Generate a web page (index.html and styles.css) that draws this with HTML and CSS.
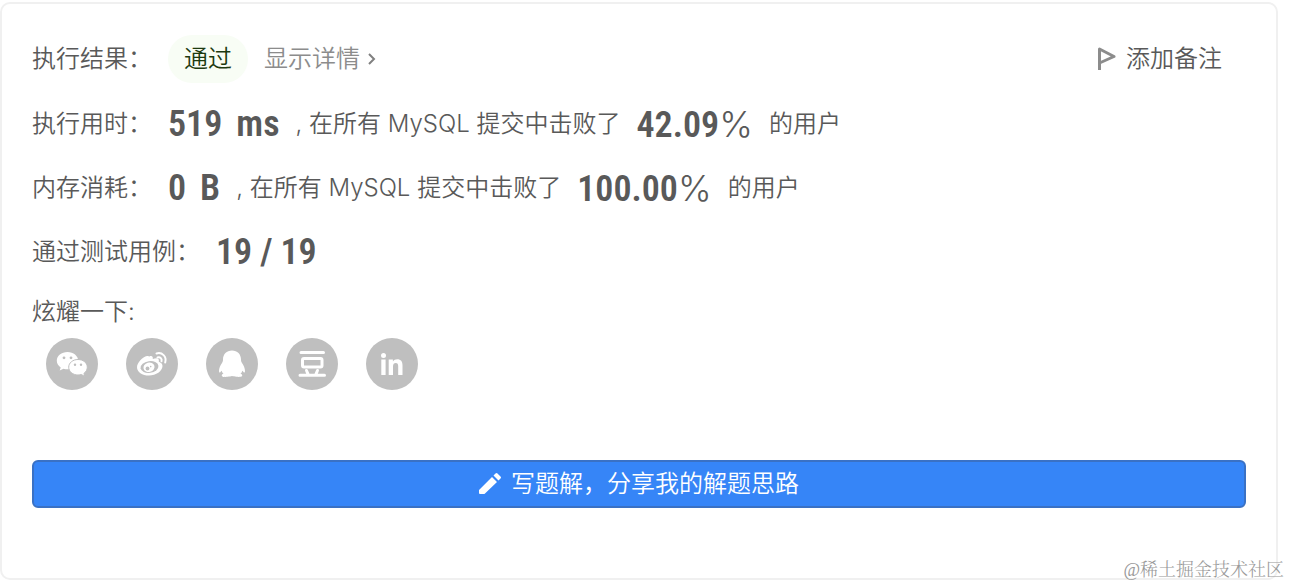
FILE: index.html
```html
<!DOCTYPE html>
<html lang="zh-CN">
<head>
    <meta charset="UTF-8">
    <meta name="viewport" content="width=device-width, initial-scale=1.0">
    <title>执行结果</title>
    <link rel="stylesheet" href="styles.css">
</head>
<body>

<main class="result-card">
    <div class="row status-row">
        <span class="label">执行结果：</span>
        <span class="status">通过</span>
        <a class="detail-link" href="#">显示详情
            <svg class="chevron" viewBox="0 0 8 14" aria-hidden="true"><path d="M1 2l5 5-5 5"/></svg>
        </a>
        <button class="note-btn" type="button">
            <svg class="flag" viewBox="0 0 20 26" aria-hidden="true"><path d="M3.500 24V3L18 10.500 3.500 17"/></svg>
            添加备注
        </button>
    </div>

    <div class="row">
        <span class="label">执行用时：</span>
        <span class="value"><span>519</span><span>ms</span></span>
        <span class="text">, 在所有 MySQL 提交中击败了</span>
        <span class="value rate"><span>42.09</span><span class="percent">%</span></span>
        <span class="text">的用户</span>
    </div>

    <div class="row">
        <span class="label">内存消耗：</span>
        <span class="value"><span>0</span><span>B</span></span>
        <span class="text">, 在所有 MySQL 提交中击败了</span>
        <span class="value rate"><span>100.00</span><span class="percent">%</span></span>
        <span class="text">的用户</span>
    </div>

    <div class="row">
        <span class="label">通过测试用例：</span>
        <span class="value count"><span>19</span><span>/</span><span>19</span></span>
    </div>

    <div class="share-title">炫耀一下:</div>
    <div class="share">
        <button class="share-btn" type="button" aria-label="微信">
            <svg viewBox="0 0 52 52" aria-hidden="true">
                <path class="fill" d="M21.500 14C15.500 14 10.800 17.800 10.800 22.700c0 2.700 1.500 5 3.900 6.700l-1 3.200 3.800-1.900c1.300.4 2.600.6 4 .6 6 0 10.700-3.900 10.700-8.600S27.500 14 21.500 14z"/>
                <circle class="dot" cx="18" cy="19.800" r="1.400"/>
                <circle class="dot" cx="25" cy="19.800" r="1.400"/>
                <path class="fill edge" d="M32 21.500c-5.200 0-9.300 3.400-9.300 7.700s4.100 7.800 9.300 7.800c1.200 0 2.300-.2 3.300-.5l3.500 1.900-.9-3c2.100-1.500 3.400-3.700 3.400-6.200 0-4.300-4.100-7.700-9.300-7.700z"/>
                <circle class="dot" cx="29" cy="26.800" r="1.200"/>
                <circle class="dot" cx="35" cy="26.800" r="1.200"/>
            </svg>
        </button>
        <button class="share-btn" type="button" aria-label="微博">
            <svg viewBox="0 0 52 52" aria-hidden="true">
                <path class="fill" d="M23.500 18.500c2-.9 3.600-.4 3.300 2.500 3-1.300 7-1.600 6 2.700 2 .7 3.700 2 3.700 4.300 0 5-6.500 9.500-13.500 9.500-6.800 0-12-3.500-12-8.300 0-4.200 5.600-10.400 10-11.200 1-.2 1.900 0 2.500.5z"/>
                <ellipse class="dot" cx="23.500" cy="29" rx="9" ry="5.800" transform="rotate(-8 23.500 29)"/>
                <ellipse class="fill" cx="23" cy="29.300" rx="5.600" ry="4.700" transform="rotate(-15 23 29.300)"/>
                <circle class="dot" cx="21.500" cy="30.500" r="1.900"/>
                <circle class="dot" cx="24.700" cy="28.600" r=".8"/>
                <path class="wave" d="M30.500 15.500c5.500-1.700 10.500 3 8.700 9M31.500 19.500c2.800-.8 4.700 1.300 4 3.800"/>
            </svg>
        </button>
        <button class="share-btn" type="button" aria-label="QQ">
            <svg viewBox="0 0 52 52" aria-hidden="true">
                <path class="fill" d="M26 12.500c-5.400 0-9 3.800-9 9 0 1.500-.2 2.200-1 3.400-1.500 2.300-3.100 5.300-3 8 .1 1.700.8 2 1.500 1 .4-.6.700-.9 1.100-1.200.4 1.200 1 2.200 1.900 3.100-1.300.4-1.800 1.100-1.700 1.900.2 1.200 2.700 1.300 5.700 1.100 1.900-.2 3.300-.3 4.500-.7 1.200.4 2.600.5 4.500.7 3 .2 5.500.1 5.700-1.100.1-.8-.4-1.500-1.700-1.900.9-.9 1.500-1.900 1.900-3.100.4.300.7.600 1.100 1.200.7 1 1.400.7 1.500-1 .1-2.700-1.500-5.700-3-8-.8-1.200-1-1.900-1-3.400 0-5.200-3.600-9-9-9z"/>
            </svg>
        </button>
        <button class="share-btn" type="button" aria-label="豆瓣">
            <svg viewBox="0 0 52 52" aria-hidden="true">
                <path class="douban" d="M15 14.500h22.500M14 37.300h24.500M20.500 32.500l1.800 4.300M31.500 32.500l-1.800 4.300"/>
                <rect class="douban" x="16.500" y="20.500" width="19.500" height="8.500" rx="1.500"/>
            </svg>
        </button>
        <button class="share-btn" type="button" aria-label="LinkedIn">
            <svg viewBox="0 0 52 52" aria-hidden="true">
                <circle class="fill" cx="17.500" cy="17.500" r="2.500"/>
                <path class="fill" d="M15.300 21.500h4.300V37h-4.300zM22.700 21.500h4.200v2c1-1.500 2.400-2.300 4.300-2.300 3.700 0 5.300 2.200 5.300 6.100V37h-4.300v-8.800c0-2.200-.8-3.300-2.400-3.300-1.800 0-2.800 1.200-2.800 3.400V37h-4.300z"/>
            </svg>
        </button>
    </div>

    <button class="write-btn" type="button">
        <svg class="pencil" viewBox="0 0 22 22" aria-hidden="true"><path d="M1 21q-1 0-1-1v-3L13 4l5 5L6 20.500q-.5.500-1.500.5zM14.500 2.500L16.500.5q1-1 2 0l3 3q1 1 0 2l-2 2z"/></svg>
        写题解，分享我的解题思路
    </button>
</main>

<div class="watermark">@稀土掘金技术社区</div>

</body>
</html>
```

FILE: styles.css
```css
* { box-sizing: border-box; }
body { margin: 0; padding: 2px 12px 6px 0; background: #fff; color: #595959; font-family: "Inter", "Noto Sans CJK SC", sans-serif; font-size: 24px; font-weight: 350; line-height: 36px; }
button { padding: 0; border: none; background: none; color: inherit; font: inherit; cursor: pointer; }

.result-card { padding: 24px 30px 70px; border: 2px solid #f0f0f0; border-radius: 10px; }

/* Result rows */
.row { display: flex; align-items: center; height: 64px; line-height: 64px; white-space: pre; }
.label { margin-right: 16px; }
.value { display: flex; align-items: baseline; gap: 14px; margin-right: 16px; font-family: "DIN Alternate", "Roboto Condensed", "Liberation Sans Narrow", "Roboto", sans-serif; font-size: 36px; font-weight: 600; }
.rate { gap: 0; }
.count { gap: 8px; }
.text { margin-right: 16px; }
.percent { font-family: "Inter", sans-serif; font-weight: 300; }

.status-row { height: 62px; margin-bottom: 2px; line-height: 48px; }
.status { padding: 0 16px; border-radius: 24px; background: #f8fdf5; color: #1d3a10; }
.detail-link { display: flex; align-items: center; gap: 8px; margin-left: 16px; color: #8c8c8c; text-decoration: none; white-space: normal; }
.chevron { width: 8px; height: 14px; fill: none; stroke: #808080; stroke-width: 2; }
.note-btn { display: flex; align-items: center; gap: 10px; margin-left: auto; margin-right: 24px; white-space: normal; }
.flag { width: 20px; height: 26px; fill: none; stroke: #8c8c8c; stroke-width: 3; stroke-linejoin: round; }

/* Share buttons */
.share-title { margin-top: 10px; }
.share { display: flex; gap: 28px; margin: 8px 14px 70px; }
.share-btn { width: 52px; height: 52px; border-radius: 50%; background: #bfbfbf; }
.share-btn svg { display: block; width: 52px; height: 52px; }
.fill { fill: #fff; }
.dot { fill: #bfbfbf; }
.edge { stroke: #bfbfbf; stroke-width: 1; }
.wave { fill: none; stroke: #fff; stroke-width: 2; stroke-linecap: round; }
.douban { fill: none; stroke: #fff; stroke-width: 3; stroke-linecap: round; }

.write-btn { display: flex; align-items: center; justify-content: center; gap: 10px; width: 100%; height: 48px; border: 2px solid #3a71c4; border-radius: 6px; background: #3685f7; color: #fff; }
.pencil { width: 22px; height: 22px; fill: #fff; }

.watermark { position: absolute; right: 6px; bottom: 4px; color: #999; font-family: "Liberation Serif", "Noto Serif CJK SC", "Noto Sans CJK SC", serif; font-size: 18px; line-height: 24px; }
```
